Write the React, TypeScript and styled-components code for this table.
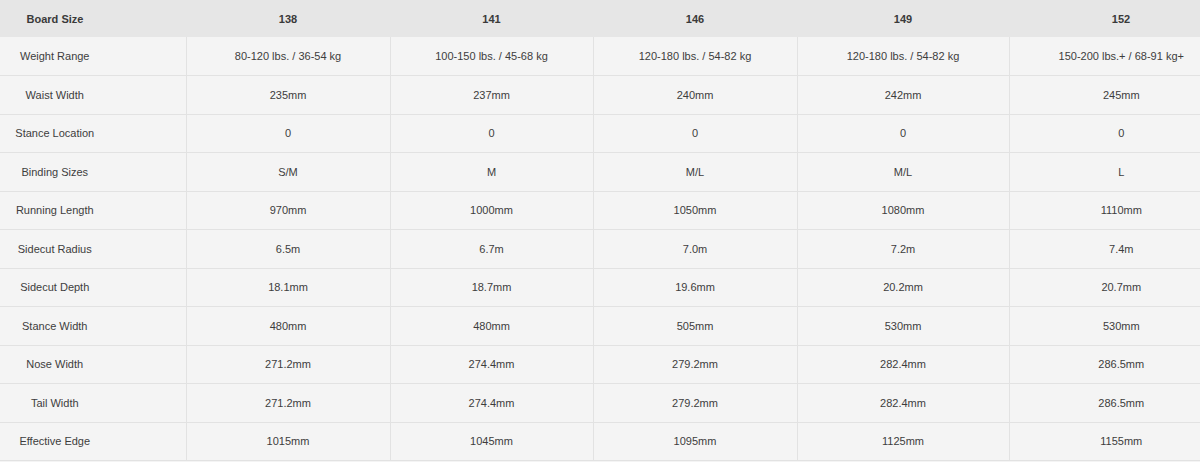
import React from 'react'
import styled, { createGlobalStyle } from 'styled-components'

const GlobalStyle = createGlobalStyle`
  html, body {
    margin: 0;
    padding: 0;
    overflow: hidden;
    background: #f4f4f4;
  }
`

const sizes = ['138', '141', '146', '149', '152']
const colWidths = [186, 204, 203, 204, 212, 224]

const specs: [string, string[]][] = [
  ['Weight Range', ['80-120 lbs. / 36-54 kg', '100-150 lbs. / 45-68 kg', '120-180 lbs. / 54-82 kg', '120-180 lbs. / 54-82 kg', '150-200 lbs.+ / 68-91 kg+']],
  ['Waist Width', ['235mm', '237mm', '240mm', '242mm', '245mm']],
  ['Stance Location', ['0', '0', '0', '0', '0']],
  ['Binding Sizes', ['S/M', 'M', 'M/L', 'M/L', 'L']],
  ['Running Length', ['970mm', '1000mm', '1050mm', '1080mm', '1110mm']],
  ['Sidecut Radius', ['6.5m', '6.7m', '7.0m', '7.2m', '7.4m']],
  ['Sidecut Depth', ['18.1mm', '18.7mm', '19.6mm', '20.2mm', '20.7mm']],
  ['Stance Width', ['480mm', '480mm', '505mm', '530mm', '530mm']],
  ['Nose Width', ['271.2mm', '274.4mm', '279.2mm', '282.4mm', '286.5mm']],
  ['Tail Width', ['271.2mm', '274.4mm', '279.2mm', '282.4mm', '286.5mm']],
  ['Effective Edge', ['1015mm', '1045mm', '1095mm', '1125mm', '1155mm']],
]

const App: React.FC = () => (
  <>
    <GlobalStyle />
    <SpecTable>
      <colgroup>
        {colWidths.map((w, i) => (
          <col key={i} style={{ width: w }} />
        ))}
      </colgroup>
      <thead>
        <HeadRow>
          <HeadCell $label>Board Size</HeadCell>
          {sizes.map(s => (
            <HeadCell key={s}>{s}</HeadCell>
          ))}
        </HeadRow>
      </thead>
      <tbody>
        {specs.map(([label, values]) => (
          <BodyRow key={label}>
            <Cell $label>{label}</Cell>
            {values.map((v, i) => (
              <Cell key={i}>{v}</Cell>
            ))}
          </BodyRow>
        ))}
      </tbody>
    </SpecTable>
  </>
)

const SpecTable = styled.table`
  width: 1233px;
  table-layout: fixed;
  border-collapse: collapse;
  font-family: 'Liberation Sans', Arial, sans-serif;
  font-size: 11px;
  color: #3d3d3d;
`

const HeadRow = styled.tr`
  height: 37px;
  background: #e6e6e6;
`

const HeadCell = styled.th<{ $label?: boolean }>`
  padding: ${props => (props.$label ? '0 76px 0 0' : '0')};
  font-weight: 700;
  text-align: center;
  color: #3a3a3a;
  border: none;
`

const BodyRow = styled.tr`
  height: 38.5px;
  background: #f4f4f4;
  border-bottom: 1px solid #e2e2e2;
`

const Cell = styled.td<{ $label?: boolean }>`
  padding: ${props => (props.$label ? '0 76px 0 0' : '0')};
  text-align: center;
  white-space: nowrap;
  border-left: ${props => (props.$label ? 'none' : '1px solid #e2e2e2')};
`

export default App
